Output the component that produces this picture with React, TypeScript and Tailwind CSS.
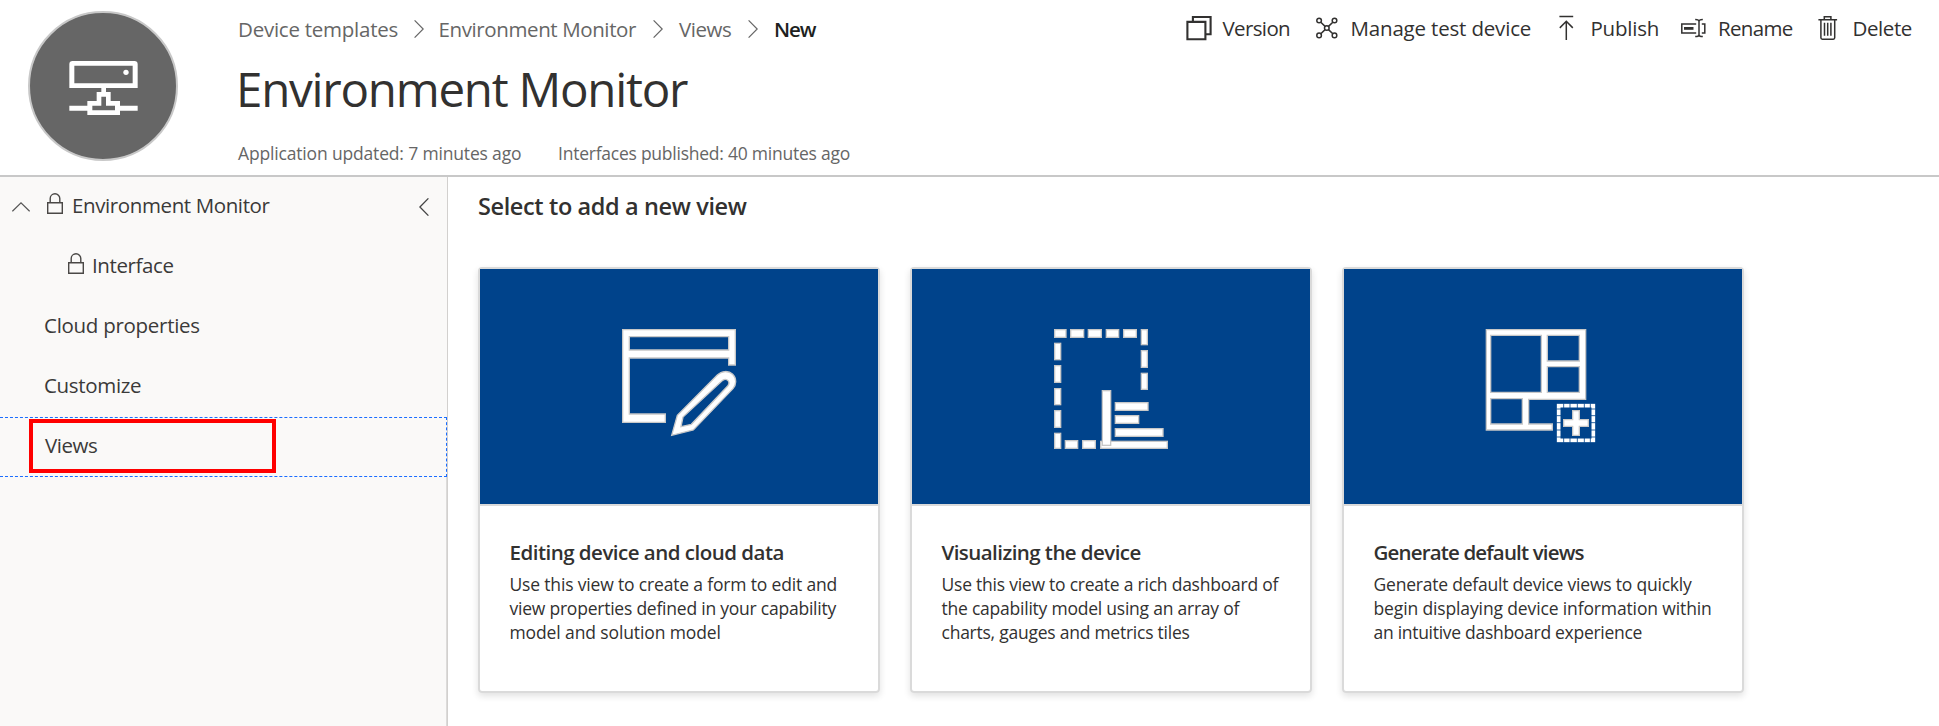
import React from "react";

function ChevronRight() {
  return (
    <svg className="h-[18px] w-[10px] shrink-0" viewBox="0 0 10 18" fill="none" stroke="#666" strokeWidth="1.2">
      <path d="M.6.4 9.2 9 .6 17.6" />
    </svg>
  );
}

function Lock() {
  return (
    <svg className="-mt-[3px] h-[21px] w-4 shrink-0" viewBox="0 0 16 21" fill="none" stroke="#4a4846" strokeWidth="1.4">
      <path d="M.7 9.7h14.6v10.6H.7zM3.2 9.7V5.6a4.8 4.8 0 0 1 9.6 0v4.1" />
    </svg>
  );
}

const iconProps = {
  className: "h-7 w-6 shrink-0 overflow-visible",
  viewBox: "0 0 24 28",
  fill: "none",
  stroke: "#323130",
  strokeWidth: 1.5,
};

const commands = [
  {
    label: "Version",
    box: "w-[127px] gap-3 tracking-[-0.63px]",
    icon: (
      <svg {...iconProps} strokeWidth={2.1}>
        <path d="M.4 7.9h18v17.3H.4zM5.9 7.5V3h17.7v17.3h-4.8" />
      </svg>
    ),
  },
  {
    label: "Manage test device",
    box: "w-[240px] gap-[13px] tracking-[-0.175px]",
    icon: (
      <svg {...iconProps}>
        <circle cx="5.1" cy="6.5" r="2.3" />
        <circle cx="20.5" cy="6.5" r="2.3" />
        <circle cx="5.1" cy="21.4" r="2.3" />
        <circle cx="20.5" cy="21.4" r="2.3" />
        <circle cx="12.8" cy="14" r="2.3" />
        <path d="M6.8 8.2l4.3 4.2M18.8 8.2l-4.3 4.2M6.8 19.7l4.3-4.1M18.8 19.7l-4.3-4.1" />
      </svg>
    ),
  },
  {
    label: "Publish",
    box: "w-[127.5px] gap-[13px] tracking-[-0.21px]",
    icon: (
      <svg {...iconProps}>
        <path d="M5.4 2.6h13.8M12.3 26V7M5.8 13.9l6.5-6.6 6.5 6.6" />
      </svg>
    ),
  },
  {
    label: "Rename",
    box: "w-[134.5px] gap-[13px] tracking-[-0.68px]",
    icon: (
      <svg {...iconProps}>
        <path d="M15.2 9.9H.8v9h14.4M20.8 9.9h3v9h-3M18 7.4v14M14.2 5.4c2.3 0 3.8.6 3.8 2.2 0-1.6 1.5-2.2 3.8-2.2M14.2 22.6c2.3 0 3.8-.6 3.8-2.2 0 1.6 1.5 2.2 3.8 2.2" />
        <path d="M3 14.4h9.5" strokeWidth="2.8" />
      </svg>
    ),
  },
  {
    label: "Delete",
    box: "gap-[13px] tracking-[-0.42px]",
    icon: (
      <svg {...iconProps}>
        <path d="M2.4 5.7h18.7M8.3 5.4V2.8h6.6v2.6M4.9 5.9v17.900c0 .9.6 1.400 1.400 1.400h11c.8 0 1.400-.5 1.400-1.400V5.900M8.500 8.800v13M11.700 8.800v13M14.900 8.800v13" />
      </svg>
    ),
  },
];

const shape = { fill: "#fff", stroke: "#c8c8c8", strokeWidth: 4, fillRule: "evenodd" as const };

const dashboardRects = [
  [74, 59, 34, 23], [122, 59, 39, 23], [175, 59, 39, 23], [229, 59, 37, 23], [281, 59, 38, 23],
  [334, 59, 18, 45], [334, 122, 18, 50], [334, 190, 18, 48],
  [74, 100, 18, 49], [74, 167, 18, 50], [74, 236, 18, 48], [74, 302, 18, 50], [74, 370, 18, 45],
  [106, 392, 37, 23], [158, 392, 38, 23],
  [212, 394, 200, 21], [217, 242, 25, 164],
  [256, 278, 98, 23], [256, 317, 70, 23], [256, 356, 143, 23],
];

const cards = [
  {
    title: "Editing device and cloud data",
    titleClass: "tracking-[-0.51px]",
    lines: [
      ["Use this view to create a form to edit and", "tracking-[-0.169px]"],
      ["view properties defined in your capability", "tracking-[-0.228px]"],
      ["model and solution model", "tracking-[-0.116px]"],
    ],
    viewBox: "-360 -123 1194 705",
    art: (
      <g {...shape}>
        <path d="M68 59H406V165H386V144H88V312H196V337H68ZM88 80V120H386V80Z" />
        <path d="M215 376 232 316 352 195C365 182 386 181 398 193 411 206 409 224 399 236L280 360ZM243 350 274 343 383 228C393 216 381 203 368 211L249 321Z" />
      </g>
    ),
  },
  {
    title: "Visualizing the device",
    titleClass: "tracking-[-0.56px]",
    lines: [
      ["Use this view to create a rich dashboard of", "tracking-[-0.232px]"],
      ["the capability model using an array of", "tracking-[-0.229px]"],
      ["charts, gauges and metrics tiles", "tracking-[-0.243px]"],
    ],
    viewBox: "-354 -123 1194 705",
    art: (
      <g {...shape}>
        {dashboardRects.map(([x, y, w, h]) => (
          <rect key={`${x}-${y}`} x={x} y={y} width={w} height={h} />
        ))}
      </g>
    ),
  },
  {
    title: "Generate default views",
    titleClass: "tracking-[-0.845px]",
    lines: [
      ["Generate default device views to quickly", "tracking-[-0.211px]"],
      ["begin displaying device information within", "tracking-[-0.132px]"],
      ["an intuitive dashboard experience", "tracking-[-0.288px]"],
    ],
    viewBox: "-348 -123 1194 705",
    art: (
      <g>
        <path
          {...shape}
          d="M79 59H377V268H206V342H277V360H79ZM92 76V247H244V76ZM262 76V153H358V76ZM262 170V247H358V170ZM92 266V342H187V266Z"
        />
        <rect x="296" y="287" width="104" height="104" fill="none" stroke="#fff" strokeWidth="11" />
        <path
          d="M311 280v14M330 280v14M352 280v14M373 280v14M391 280v14M311 384v14M330 384v14M352 384v14M373 384v14M391 384v14M289 297h14M289 317h14M289 338h14M289 360h14M289 381h14M393 297h14M393 317h14M393 338h14M393 360h14M393 381h14"
          stroke="#00438b"
          strokeOpacity=".8"
          strokeWidth="3"
        />
        <path {...shape} d="M338 302H358V329H385V349H358V376H338V349H311V329H338Z" />
      </g>
    ),
  },
];

export default function App() {
  return (
    <div className="flex h-[726px] w-full flex-col overflow-hidden bg-white font-['Open_Sans',sans-serif] text-[20.5px] leading-7 text-[#323130]">
      <header className="flex h-[177px] shrink-0 border-b-2 border-[#c8c8c8]">
        <div className="mt-[11px] ml-7 size-[150px] shrink-0 rounded-full border-2 border-[#c8c8c8] bg-[#666]">
          <svg className="size-full" viewBox="90 39 438 438" fill="#fff" fillRule="evenodd">
            <path d="M218 183H403Q413 183 413 193V264H208V193Q208 183 218 183ZM223 197V250H398V197Z" />
            <circle cx="378" cy="217" r="8" />
            <path d="M304 264H318V276H332V303H360V317H413V332H360V345H262V332H208V317H262V303H290V276H304ZM304 290V317H277V331H345V317H318V290Z" />
          </svg>
        </div>
        <div className="ml-[60px] flex grow flex-col pt-[15px]">
          <nav className="flex items-center text-[#666]">
            <div className="flex w-[200.5px] items-center justify-between pr-[15px] whitespace-nowrap">
              <span className="tracking-[-0.245px]">Device templates</span>
              <ChevronRight />
            </div>
            <div className="flex w-[240.5px] items-center justify-between pr-4 whitespace-nowrap">
              <span className="tracking-[-0.39px]">Environment Monitor</span>
              <ChevronRight />
            </div>
            <div className="flex w-[95px] items-center justify-between pr-4">
              <span className="tracking-[-0.45px]">Views</span>
              <ChevronRight />
            </div>
            <span className="font-semibold tracking-[-1.08px] text-[#201f1e]">New</span>
          </nav>
          <h1 className="mt-4 -ml-[2px] text-[47.5px] leading-[60px] tracking-[-1.24px] whitespace-nowrap">Environment Monitor</h1>
          <div className="mt-[22px] flex text-[17.5px] leading-6 whitespace-nowrap text-[#666]">
            <span className="w-[320px] tracking-[-0.166px]">Application updated: 7 minutes ago</span>
            <span className="tracking-[-0.24px]">Interfaces published: 40 minutes ago</span>
          </div>
        </div>
        <div className="flex w-[752.5px] shrink-0 pt-3.5 whitespace-nowrap">
          {commands.map((c) => (
            <div key={c.label} className={`flex h-7 shrink-0 ${c.box}`}>
              {c.icon}
              <span>{c.label}</span>
            </div>
          ))}
        </div>
      </header>

      <div className="flex min-h-0 grow">
        <aside className="flex w-[448px] shrink-0 flex-col border-r border-[#d2d0ce] bg-[#faf9f8] text-[#3b3a39]">
          <div className="flex h-[60px] items-center pb-1 pl-3">
            <svg className="mt-[3px] h-[10px] w-[18px] shrink-0" viewBox="0 0 18 10" fill="none" stroke="#555" strokeWidth="1.2">
              <path d="M.4 9.3 9 .9l8.6 8.4" />
            </svg>
            <span className="ml-[17px] flex">
              <Lock />
            </span>
            <span className="ml-[9px] grow tracking-[-0.39px]">Environment Monitor</span>
            <svg className="mt-1 mr-[18.5px] h-[18px] w-[10px]" viewBox="0 0 10 18" fill="none" stroke="#444" strokeWidth="1.3">
              <path d="M9.4.4.9 9l8.5 8.6" />
            </svg>
          </div>
          <div className="flex h-[60px] items-center gap-2 pb-1 pl-[68px]">
            <Lock />
            <span className="tracking-[-0.39px]">Interface</span>
          </div>
          <div className="flex h-[60px] items-center pb-1 pl-11 tracking-[-0.28px]">Cloud properties</div>
          <div className="flex h-[60px] items-center pb-1 pl-11 tracking-[-0.33px]">Customize</div>
          <div className="relative flex h-[60px] items-center border-y border-r border-dashed border-[#1a6dff] pb-1 pl-[45px] tracking-[-0.45px]">
            Views
            <div className="absolute top-px left-[29px] h-[54px] w-[247px] border-4 border-[#ff0000]" />
          </div>
          <div className="grow border-r border-[#dcdbda]" />
        </aside>

        <main className="flex grow flex-col pt-[12.5px] pl-[30px]">
          <h2 className="text-[23.5px] leading-8 font-semibold tracking-[-0.38px]">Select to add a new view</h2>
          <div className="mt-[45.5px] flex gap-[30px]">
            {cards.map((card) => (
              <section
                key={card.title}
                className="h-[426px] w-[402px] shrink-0 rounded-[4px] border-2 border-[#dadada] shadow-[0_3px_7px_rgba(0,0,0,0.12)]"
              >
                <div className="h-[237px] border-b-2 border-[#dadada] bg-[#00438b]">
                  <svg className="h-[235px] w-[398px]" viewBox={card.viewBox}>
                    {card.art}
                  </svg>
                </div>
                <div className="pt-8 pl-[29.5px] whitespace-nowrap">
                  <h3 className={`font-semibold ${card.titleClass}`}>{card.title}</h3>
                  <p className="mt-1.5 text-[17.5px] leading-6">
                    {card.lines.map(([text, cls]) => (
                      <span key={text} className={`block ${cls}`}>
                        {text}
                      </span>
                    ))}
                  </p>
                </div>
              </section>
            ))}
          </div>
        </main>
      </div>
    </div>
  );
}
